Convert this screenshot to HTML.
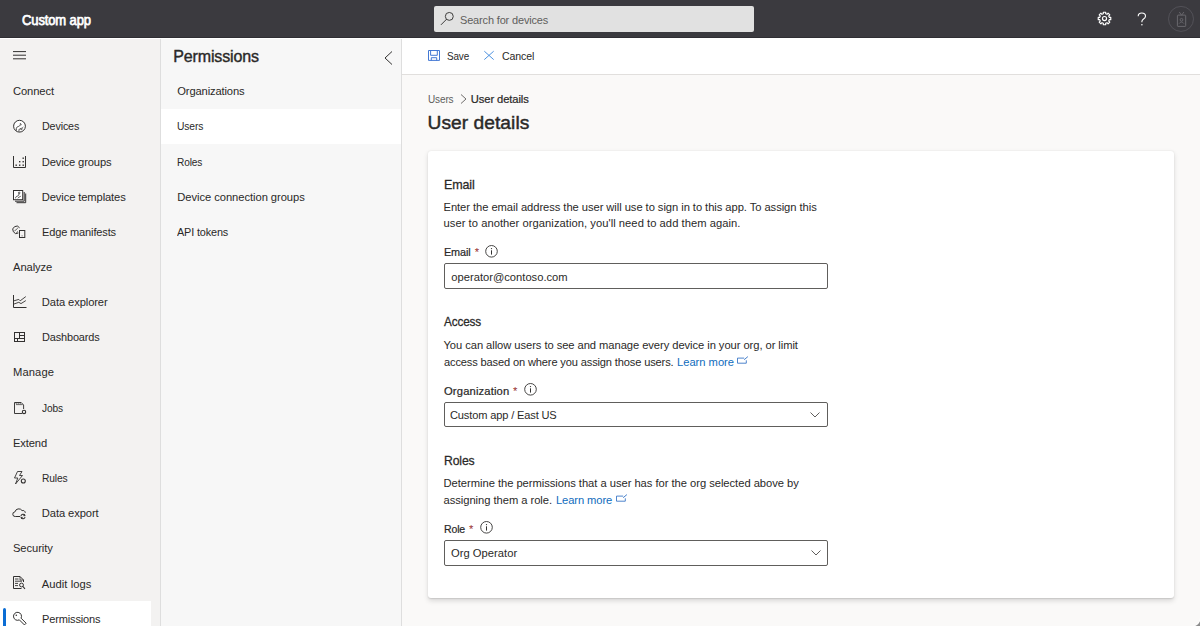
<!DOCTYPE html>
<html><head><meta charset="utf-8"><title>User details</title>
<style>
*{box-sizing:border-box;margin:0;padding:0}
html,body{width:1200px;height:626px;overflow:hidden;background:#faf9f8;font-family:"Liberation Sans",sans-serif;position:relative}
.t{position:absolute;white-space:nowrap;line-height:20px;font-family:"Liberation Sans",sans-serif}
.abs{position:absolute}
#top{left:0;top:0;width:1200px;height:38px;background:#3b3a3f;border-bottom:1px solid #2f2e33}
#topline{left:0;top:38px;width:1200px;height:1px;background:#ffffff}
#search{left:434px;top:6px;width:320px;height:26px;background:#e1e1e1;border-radius:2px}
#nav{left:0;top:39px;width:160px;height:587px;background:#f3f2f1}
#navb{left:160px;top:39px;width:1px;height:587px;background:#dedede}
#navsel{left:0;top:601px;width:151px;height:36px;background:#ffffff}
#navbar{left:3px;top:608px;width:3px;height:30px;background:#0b6dd4;border-radius:2px}
#sub{left:161px;top:39px;width:240px;height:587px;background:#f7f7f7}
#subsel{left:161px;top:109px;width:240px;height:35px;background:#ffffff}
#subb{left:401px;top:39px;width:1px;height:587px;background:#dedede}
#cmd{left:402px;top:39px;width:798px;height:36px;background:#ffffff;border-bottom:1px solid #e1dfdd}
#card{left:428px;top:151px;width:746px;height:447px;background:#fff;border-radius:3px;box-shadow:0 2.6px 5.8px rgba(0,0,0,.13),0 0.5px 1.4px rgba(0,0,0,.11)}
.box{position:absolute;left:444px;width:384px;height:26px;border:1px solid #605e5c;border-radius:2px;background:#fff}
svg{position:absolute;overflow:visible}
</style></head><body>
<div id="top" class="abs"></div>
<div id="topline" class="abs"></div>
<div id="search" class="abs"></div>
<!-- search icon -->
<svg style="left:440px;top:11px" width="14" height="15" viewBox="0 0 14 15"><circle cx="9.3" cy="5.4" r="3.95" fill="none" stroke="#3f3e3d" stroke-width="1"/><line x1="6.5" y1="8.3" x2="1.2" y2="13.6" stroke="#3f3e3d" stroke-width="1" stroke-linecap="round"/></svg>
<!-- gear -->
<svg style="left:1096.85px;top:10.95px" width="15" height="15" viewBox="0 0 15 15">
<path d="M6.31 2.75 L6.28 1.22 L8.72 1.22 L8.69 2.75 L10.02 3.30 L11.08 2.19 L12.81 3.92 L11.70 4.98 L12.25 6.31 L13.78 6.28 L13.78 8.72 L12.25 8.69 L11.70 10.02 L12.81 11.08 L11.08 12.81 L10.02 11.70 L8.69 12.25 L8.72 13.78 L6.28 13.78 L6.31 12.25 L4.98 11.70 L3.92 12.81 L2.19 11.08 L3.30 10.02 L2.75 8.69 L1.22 8.72 L1.22 6.28 L2.75 6.31 L3.30 4.98 L2.19 3.92 L3.92 2.19 L4.98 3.30Z" fill="none" stroke="#fff" stroke-width="1.15" stroke-linejoin="round"/>
<circle cx="7.5" cy="7.5" r="2.05" fill="none" stroke="#fff" stroke-width="1.15"/></svg>
<!-- help -->
<svg style="left:1137px;top:11.5px" width="10" height="15" viewBox="0 0 10 15"><path d="M1.2 4.2C1.2 2.3 2.8 1 4.8 1 6.8 1 8.5 2.3 8.5 4.2 8.5 6 7.2 6.7 6 7.5 5.2 8.1 4.9 8.6 4.9 9.6V10.2" fill="none" stroke="#fff" stroke-width="1.1"/><circle cx="4.9" cy="12.7" r="0.8" fill="#fff"/></svg>
<!-- avatar -->
<svg style="left:1168px;top:6px" width="26" height="26" viewBox="0 0 26 26"><circle cx="13" cy="12.9" r="12.5" fill="none" stroke="#55545a" stroke-width="0.9"/>
<rect x="9.4" y="9.1" width="8.3" height="11.3" rx="0.6" fill="none" stroke="#6a696e" stroke-width="1"/><path d="M11.3 6L13.5 9.2M15.9 6L13.6 9.2" stroke="#6a696e" stroke-width="0.9" fill="none"/><circle cx="13.5" cy="13.8" r="1.35" fill="none" stroke="#6a696e" stroke-width="0.9"/><path d="M11.1 17.6Q13.5 14.4 15.9 17.6" fill="none" stroke="#6a696e" stroke-width="0.9"/></svg>

<div id="nav" class="abs"></div>
<div id="navb" class="abs"></div>
<div id="navsel" class="abs"></div>
<div id="navbar" class="abs"></div>
<!-- hamburger -->
<svg style="left:13px;top:51px" width="13" height="9" viewBox="0 0 13 9"><path d="M0 0.6H13M0 4.2H13M0 7.8H13" stroke="#323130" stroke-width="1"/></svg>
<!-- nav icons -->
<!-- devices (row1 center ~126) -->
<svg style="left:13px;top:120px" width="13" height="13" viewBox="0 0 13 13"><circle cx="6.5" cy="6.2" r="5.9" fill="#fff" stroke="#323130" stroke-width="1"/><path d="M3.3 10.6V8.6C3.3 7.3 4.3 6.9 5.6 6.4 6.9 5.9 7.6 5.2 7.3 3.4" fill="none" stroke="#323130" stroke-width="0.9"/><path d="M7.3 3.4C8 3.6 8.6 4.4 8.2 5.2" fill="none" stroke="#555" stroke-width="0.8"/><path d="M6.2 11.6C5.6 10.2 6.1 8.8 7.4 8.6 8.5 8.4 9.5 8.1 10.3 7.1M7.4 9.2C8.2 10 9.2 9.6 9.4 8.8" fill="none" stroke="#323130" stroke-width="0.9"/></svg>
<!-- device groups -->
<svg style="left:13px;top:156px" width="13" height="12" viewBox="0 0 13 12"><path d="M0.5 0V11.5H12.5V0" fill="none" stroke="#323130" stroke-width="1"/><g fill="#323130"><rect x="2.5" y="8.5" width="1.4" height="1.4"/><rect x="6" y="8.5" width="1.4" height="1.4"/><rect x="9.5" y="8.5" width="1.4" height="1.4"/><rect x="6" y="5" width="1.4" height="1.4"/><rect x="9.5" y="5" width="1.4" height="1.4"/><rect x="9.5" y="1.5" width="1.4" height="1.4"/></g></svg>
<!-- device templates -->
<svg style="left:13px;top:190px" width="14" height="14" viewBox="0 0 14 14"><rect x="0.5" y="0.5" width="9.2" height="9.2" fill="#fff" stroke="#323130" stroke-width="1"/><path d="M2 11.2H11.2V2M3.5 12.7H12.7V3.5" fill="none" stroke="#323130" stroke-width="1"/><path d="M2.6 8.3C2.6 6.8 3.5 6.3 4.6 6 5.6 5.7 6 5.1 5.8 3.9M4.9 8.3c0.3-0.8 0.9-1.2 1.7-1.4 0.6-0.1 1-0.5 1.1-1" fill="none" stroke="#323130" stroke-width="0.85"/><circle cx="6.2" cy="2.9" r="0.8" fill="none" stroke="#323130" stroke-width="0.8"/></svg>
<!-- edge manifests -->
<svg style="left:13px;top:225px" width="14" height="14" viewBox="0 0 14 14"><path d="M6.6 2.8A3.7 3.7 0 1 0 5.4 8" fill="none" stroke="#323130" stroke-width="1"/><path d="M1.8 6.2C2.2 4.9 3 4.4 4 4.2M4.2 3.6l0.8-0.8M3.6 7.8c0.2-0.7 0.7-1.1 1.3-1.2" fill="none" stroke="#323130" stroke-width="0.8"/><rect x="6.5" y="5.5" width="5.3" height="7" fill="#f3f2f1" stroke="#323130" stroke-width="1"/><path d="M9.1 10.5v0.8" stroke="#323130" stroke-width="0.9"/></svg>
<!-- data explorer -->
<svg style="left:13px;top:295px" width="14" height="13" viewBox="0 0 14 13"><path d="M0.5 0V12.5H13.5" fill="none" stroke="#323130" stroke-width="1"/><path d="M1 9L5.8 7.3 8 8.6 12.8 5.6M1 5.8L5.8 4.4 7.2 5.8 12.8 1.6" fill="none" stroke="#323130" stroke-width="0.9"/></svg>
<!-- dashboards -->
<svg style="left:14px;top:332px" width="11" height="10" viewBox="0 0 11 10"><rect x="0.5" y="0.5" width="10" height="9" fill="none" stroke="#323130" stroke-width="1"/><path d="M5.5 0.5V6.5M0.5 6.5H10.5M5.5 3.5H10.5M3.5 6.5V9.5" fill="none" stroke="#323130" stroke-width="1"/></svg>
<!-- jobs -->
<svg style="left:14px;top:402px" width="13" height="13" viewBox="0 0 13 13"><path d="M8 11.5H0.5V0.5H7.2L9.6 3V7" fill="none" stroke="#323130" stroke-width="0.95"/><path d="M2.2 0.6V2.2M4.2 0.6V2.2M6.2 0.6V2.2M2 2.6H8.6" stroke="#323130" stroke-width="0.7"/><circle cx="10" cy="9.9" r="1.7" fill="none" stroke="#323130" stroke-width="1.1"/></svg>
<!-- rules -->
<svg style="left:13px;top:471px" width="14" height="14" viewBox="0 0 14 14"><path d="M4.5 0.5H9L6.5 4.5H9.5L2.5 13L4.8 7H1.5Z" fill="none" stroke="#323130" stroke-width="0.9" stroke-linejoin="round"/><circle cx="10.3" cy="10" r="2" fill="none" stroke="#323130" stroke-width="1.1"/></svg>
<!-- data export -->
<svg style="left:12px;top:506px" width="16" height="14" viewBox="0 0 16 14"><path d="M8.2 10.5H3.3A2.3 2.3 0 0 1 2.9 5.9A4 4 0 0 1 10.1 4.6A2.4 2.4 0 0 1 13.3 6.8" fill="none" stroke="#323130" stroke-width="1"/><path d="M8.9 10A2.2 2.2 0 0 1 12.9 9.3M13.1 11.1A2.2 2.2 0 0 1 9.2 11.9" fill="none" stroke="#323130" stroke-width="1.1"/><path d="M12.2 8.2L13.4 9.8 11.5 10ZM9.8 12.9L8.6 11.3 10.5 11.1Z" fill="#323130" stroke="#323130" stroke-width="0.4"/></svg>
<!-- audit logs -->
<svg style="left:13px;top:576px" width="14" height="14" viewBox="0 0 14 14"><path d="M8.5 12.5H0.5V0.5H7L10.5 4V6" fill="none" stroke="#323130" stroke-width="1"/><path d="M7 0.5V4H10.5" fill="none" stroke="#323130" stroke-width="0.8"/><path d="M2 3H5.5M2 5.2H9M2 7.4H5M2 9.6H5" stroke="#323130" stroke-width="0.9"/><circle cx="8.5" cy="9" r="1.9" fill="none" stroke="#323130" stroke-width="1"/><path d="M9.8 10.4L12 12.8" stroke="#323130" stroke-width="1.1"/></svg>
<!-- permissions key -->
<svg style="left:13px;top:612px" width="14" height="14" viewBox="0 0 14 14"><path d="M8.05 6.15L13.13 11.23 11.43 12.93 6.35 7.85A4 4 0 1 1 8.05 6.15Z" fill="none" stroke="#323130" stroke-width="1" stroke-linejoin="round"/><circle cx="3.3" cy="3.2" r="0.8" fill="#323130"/></svg>

<div id="sub" class="abs"></div>
<div id="subsel" class="abs"></div>
<div id="subb" class="abs"></div>
<!-- collapse chevron -->
<svg style="left:383.7px;top:50.5px" width="9" height="14" viewBox="0 0 9 14"><path d="M8 0.5L1 7 8 13.5" fill="none" stroke="#323130" stroke-width="1"/></svg>

<div id="cmd" class="abs"></div>
<!-- save icon -->
<svg style="left:428px;top:49.5px" width="12" height="12" viewBox="0 0 12 12"><path d="M0.5 0.5H11.5V10.4H0.5Z" fill="none" stroke="#3a72d2" stroke-width="0.95"/><path d="M2.6 0.5V5.3H9.3V0.5M3.3 10.4V7.7H8.7V10.4" fill="none" stroke="#3a72d2" stroke-width="0.95"/></svg>
<!-- cancel X -->
<svg style="left:484px;top:51px" width="10" height="9" viewBox="0 0 10 9"><path d="M0.3 0.2L9.7 8.6M9.7 0.2L0.3 8.6" stroke="#3a86dc" stroke-width="0.9"/></svg>
<!-- breadcrumb chevron -->
<svg style="left:460px;top:94px" width="7" height="10" viewBox="0 0 7 10"><path d="M1 0.5L6 5 1 9.5" fill="none" stroke="#605e5c" stroke-width="0.9"/></svg>

<div id="card" class="abs"></div>
<!-- info icons -->
<svg style="left:485px;top:245px" width="13" height="13" viewBox="0 0 13 13"><circle cx="6.5" cy="6.3" r="5.8" fill="none" stroke="#323130" stroke-width="0.9"/><path d="M6.5 5.3V9.6" stroke="#323130" stroke-width="1"/><circle cx="6.5" cy="3.6" r="0.65" fill="#323130"/></svg>
<svg style="left:523.5px;top:383px" width="13" height="13" viewBox="0 0 13 13"><circle cx="6.5" cy="6.3" r="5.8" fill="none" stroke="#323130" stroke-width="0.9"/><path d="M6.5 5.3V9.6" stroke="#323130" stroke-width="1"/><circle cx="6.5" cy="3.6" r="0.65" fill="#323130"/></svg>
<svg style="left:480px;top:521px" width="13" height="13" viewBox="0 0 13 13"><circle cx="6.5" cy="6.3" r="5.8" fill="none" stroke="#323130" stroke-width="0.9"/><path d="M6.5 5.3V9.6" stroke="#323130" stroke-width="1"/><circle cx="6.5" cy="3.6" r="0.65" fill="#323130"/></svg>
<div class="box" style="top:263px"></div>
<div class="box" style="top:402px;height:25px"></div>
<div class="box" style="top:540px;height:26px"></div>
<!-- dropdown chevrons -->
<svg style="left:810px;top:411.5px" width="10" height="6" viewBox="0 0 10 6"><path d="M0.5 0.5L5 5 9.5 0.5" fill="none" stroke="#605e5c" stroke-width="1"/></svg>
<svg style="left:811px;top:550px" width="10" height="6" viewBox="0 0 10 6"><path d="M0.5 0.5L5 5 9.5 0.5" fill="none" stroke="#605e5c" stroke-width="1"/></svg>
<!-- external link icons -->
<svg style="left:737px;top:356px" width="12" height="8" viewBox="0 0 12 8"><path d="M7.2 2.1H0.5V7.2H9.3V4.3" fill="none" stroke="#2f6fc4" stroke-width="0.85"/><path d="M7.2 3.7L10.9 0.6" fill="none" stroke="#2f6fc4" stroke-width="0.9"/></svg>
<svg style="left:615.5px;top:493.5px" width="12" height="8" viewBox="0 0 12 8"><path d="M7.2 2.1H0.5V7.2H9.3V4.3" fill="none" stroke="#2f6fc4" stroke-width="0.85"/><path d="M7.2 3.7L10.9 0.6" fill="none" stroke="#2f6fc4" stroke-width="0.9"/></svg>
<svg style="left:1188px;top:614px" width="12" height="12" viewBox="0 0 12 12"><path d="M12 5A7 7 0 0 1 5 12H12Z" fill="#a8a8a8"/><path d="M12 6.2A5.8 5.8 0 0 1 6.2 12H12Z" fill="#8c8c8c"/><path d="M12 4.5A7.5 7.5 0 0 1 4.5 12" fill="none" stroke="#ffffff" stroke-width="1"/></svg>
<span id="t0" class="t" style="left:22.00px;top:10px;font-size:14.5px;font-weight:400;color:#ffffff;letter-spacing:-0.150px;-webkit-text-stroke:0.75px #ffffff;transform:scaleX(0.8989);transform-origin:0.00px 0;">Custom app</span>
<span id="t1" class="t" style="left:460.00px;top:10px;font-size:11.2px;font-weight:400;color:#605e5c;letter-spacing:-0.150px;transform:scaleX(0.9800);transform-origin:0.00px 0;">Search for devices</span>
<span id="t2" class="t" style="left:13.00px;top:81px;font-size:11.2px;font-weight:400;color:#2a2928;letter-spacing:-0.093px;">Connect</span>
<span id="t3" class="t" style="left:41.80px;top:116px;font-size:11.2px;font-weight:400;color:#2a2928;letter-spacing:-0.150px;transform:scaleX(0.9594);transform-origin:0.00px 0;">Devices</span>
<span id="t4" class="t" style="left:41.80px;top:152px;font-size:11.2px;font-weight:400;color:#2a2928;letter-spacing:-0.143px;">Device groups</span>
<span id="t5" class="t" style="left:41.80px;top:187px;font-size:11.2px;font-weight:400;color:#2a2928;letter-spacing:-0.121px;">Device templates</span>
<span id="t6" class="t" style="left:41.80px;top:222px;font-size:11.2px;font-weight:400;color:#2a2928;letter-spacing:-0.150px;transform:scaleX(0.9859);transform-origin:0.00px 0;">Edge manifests</span>
<span id="t7" class="t" style="left:13.00px;top:257px;font-size:11.2px;font-weight:400;color:#2a2928;letter-spacing:-0.080px;">Analyze</span>
<span id="t8" class="t" style="left:41.80px;top:292px;font-size:11.2px;font-weight:400;color:#2a2928;letter-spacing:-0.103px;">Data explorer</span>
<span id="t9" class="t" style="left:41.80px;top:327px;font-size:11.2px;font-weight:400;color:#2a2928;letter-spacing:-0.150px;transform:scaleX(0.9784);transform-origin:0.00px 0;">Dashboards</span>
<span id="t10" class="t" style="left:13.00px;top:362px;font-size:11.2px;font-weight:400;color:#2a2928;letter-spacing:0.099px;">Manage</span>
<span id="t11" class="t" style="left:41.80px;top:398px;font-size:11.2px;font-weight:400;color:#2a2928;letter-spacing:-0.150px;transform:scaleX(0.9073);transform-origin:0.00px 0;">Jobs</span>
<span id="t12" class="t" style="left:13.00px;top:433px;font-size:11.2px;font-weight:400;color:#2a2928;letter-spacing:-0.142px;">Extend</span>
<span id="t13" class="t" style="left:41.80px;top:468px;font-size:11.2px;font-weight:400;color:#2a2928;letter-spacing:-0.150px;transform:scaleX(0.9152);transform-origin:0.00px 0;">Rules</span>
<span id="t14" class="t" style="left:41.80px;top:503px;font-size:11.2px;font-weight:400;color:#2a2928;letter-spacing:-0.092px;">Data export</span>
<span id="t15" class="t" style="left:13.00px;top:538px;font-size:11.2px;font-weight:400;color:#2a2928;letter-spacing:-0.088px;">Security</span>
<span id="t16" class="t" style="left:41.80px;top:574px;font-size:11.2px;font-weight:400;color:#2a2928;letter-spacing:0.040px;">Audit logs</span>
<span id="t17" class="t" style="left:41.80px;top:609px;font-size:11.2px;font-weight:400;color:#2a2928;letter-spacing:-0.150px;transform:scaleX(0.9861);transform-origin:0.00px 0;">Permissions</span>
<span id="t18" class="t" style="left:173.20px;top:47px;font-size:16px;font-weight:400;color:#2a2928;letter-spacing:-0.133px;-webkit-text-stroke:0.4px #2a2928;">Permissions</span>
<span id="t19" class="t" style="left:177.30px;top:81px;font-size:11.2px;font-weight:400;color:#2a2928;letter-spacing:-0.144px;">Organizations</span>
<span id="t20" class="t" style="left:177.30px;top:116px;font-size:11.2px;font-weight:400;color:#2a2928;letter-spacing:-0.150px;transform:scaleX(0.9200);transform-origin:0.00px 0;">Users</span>
<span id="t21" class="t" style="left:177.30px;top:152px;font-size:11.2px;font-weight:400;color:#2a2928;letter-spacing:-0.150px;transform:scaleX(0.9047);transform-origin:0.00px 0;">Roles</span>
<span id="t22" class="t" style="left:177.30px;top:187px;font-size:11.2px;font-weight:400;color:#2a2928;letter-spacing:-0.054px;">Device connection groups</span>
<span id="t23" class="t" style="left:177.30px;top:222px;font-size:11.2px;font-weight:400;color:#2a2928;letter-spacing:-0.150px;transform:scaleX(0.9707);transform-origin:0.00px 0;">API tokens</span>
<span id="t24" class="t" style="left:447.20px;top:46px;font-size:11.2px;font-weight:400;color:#2a2928;letter-spacing:-0.150px;transform:scaleX(0.8861);transform-origin:0.00px 0;">Save</span>
<span id="t25" class="t" style="left:501.80px;top:46px;font-size:11.2px;font-weight:400;color:#2a2928;letter-spacing:-0.150px;transform:scaleX(0.9467);transform-origin:0.00px 0;">Cancel</span>
<span id="t26" class="t" style="left:428.00px;top:89px;font-size:11.2px;font-weight:400;color:#605e5c;letter-spacing:-0.150px;transform:scaleX(0.8959);transform-origin:0.00px 0;">Users</span>
<span id="t27" class="t" style="left:470.80px;top:89px;font-size:11.2px;font-weight:400;color:#2a2928;letter-spacing:-0.098px;-webkit-text-stroke:0.22px #2a2928;">User details</span>
<span id="t28" class="t" style="left:427.50px;top:113px;font-size:19.2px;font-weight:400;color:#2a2928;letter-spacing:0.044px;-webkit-text-stroke:0.45px #2a2928;">User details</span>
<span id="t29" class="t" style="left:443.50px;top:175px;font-size:13px;font-weight:400;color:#2a2928;letter-spacing:-0.150px;-webkit-text-stroke:0.28px #2a2928;transform:scaleX(0.9607);transform-origin:1.00px 0;">Email</span>
<span id="t30" class="t" style="left:443.50px;top:197px;font-size:11.2px;font-weight:400;color:#2a2928;letter-spacing:-0.059px;">Enter the email address the user will use to sign in to this app. To assign this</span>
<span id="t31" class="t" style="left:443.50px;top:213px;font-size:11.2px;font-weight:400;color:#2a2928;letter-spacing:0.042px;">user to another organization, you'll need to add them again.</span>
<span id="t32" class="t" style="left:444.30px;top:242px;font-size:11.2px;font-weight:400;color:#2a2928;letter-spacing:-0.150px;-webkit-text-stroke:0.22px #2a2928;transform:scaleX(0.9707);transform-origin:0.00px 0;">Email</span>
<span id="t33" class="t" style="left:474.70px;top:242px;font-size:11.2px;font-weight:400;color:#9a3232;letter-spacing:0.000px;">*</span>
<span id="t34" class="t" style="left:451.30px;top:267px;font-size:11.2px;font-weight:400;color:#2a2928;letter-spacing:-0.007px;">operator@contoso.com</span>
<span id="t35" class="t" style="left:444.40px;top:312px;font-size:13px;font-weight:400;color:#2a2928;letter-spacing:-0.150px;-webkit-text-stroke:0.28px #2a2928;transform:scaleX(0.9027);transform-origin:0.00px 0;">Access</span>
<span id="t36" class="t" style="left:443.50px;top:335px;font-size:11.2px;font-weight:400;color:#2a2928;letter-spacing:-0.064px;">You can allow users to see and manage every device in your org, or limit</span>
<span id="t37" class="t" style="left:443.50px;top:352px;font-size:11.2px;font-weight:400;color:#2a2928;letter-spacing:-0.150px;transform:scaleX(0.9915);transform-origin:0.00px 0;">access based on where you assign those users.</span>
<span id="t38" class="t" style="left:677.00px;top:352px;font-size:11.2px;font-weight:400;color:#0f6cbd;letter-spacing:-0.021px;">Learn more</span>
<span id="t39" class="t" style="left:444.00px;top:381px;font-size:11.2px;font-weight:400;color:#2a2928;letter-spacing:0.150px;-webkit-text-stroke:0.22px #2a2928;transform:scaleX(1.0022);transform-origin:0.00px 0;">Organization</span>
<span id="t40" class="t" style="left:513.00px;top:381px;font-size:11.2px;font-weight:400;color:#9a3232;letter-spacing:0.000px;">*</span>
<span id="t41" class="t" style="left:450.40px;top:405px;font-size:11.2px;font-weight:400;color:#2a2928;letter-spacing:-0.150px;transform:scaleX(0.9901);transform-origin:0.00px 0;">Custom app / East US</span>
<span id="t42" class="t" style="left:443.50px;top:451px;font-size:13px;font-weight:400;color:#2a2928;letter-spacing:-0.150px;-webkit-text-stroke:0.28px #2a2928;transform:scaleX(0.9366);transform-origin:1.00px 0;">Roles</span>
<span id="t43" class="t" style="left:443.50px;top:473px;font-size:11.2px;font-weight:400;color:#2a2928;letter-spacing:-0.032px;">Determine the permissions that a user has for the org selected above by</span>
<span id="t44" class="t" style="left:443.50px;top:490px;font-size:11.2px;font-weight:400;color:#2a2928;letter-spacing:-0.040px;">assigning them a role.</span>
<span id="t45" class="t" style="left:556.00px;top:490px;font-size:11.2px;font-weight:400;color:#0f6cbd;letter-spacing:-0.110px;">Learn more</span>
<span id="t46" class="t" style="left:444.00px;top:519px;font-size:11.2px;font-weight:400;color:#2a2928;letter-spacing:-0.150px;-webkit-text-stroke:0.22px #2a2928;transform:scaleX(0.9402);transform-origin:0.00px 0;">Role</span>
<span id="t47" class="t" style="left:469.00px;top:519px;font-size:11.2px;font-weight:400;color:#9a3232;letter-spacing:0.000px;">*</span>
<span id="t48" class="t" style="left:451.00px;top:543px;font-size:11.2px;font-weight:400;color:#2a2928;letter-spacing:0.020px;">Org Operator</span>
</body></html>
